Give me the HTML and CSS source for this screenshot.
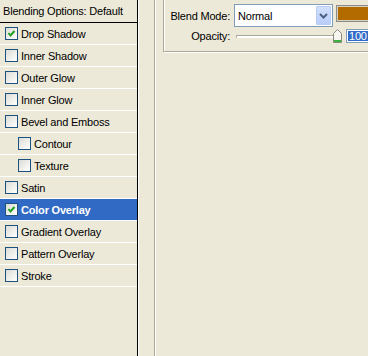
FILE: index.html
```html
<!DOCTYPE html>
<html lang="en">

<head>
  <meta charset="UTF-8">
  <title>Layer Style</title>
  <link rel="stylesheet" href="styles.css">
</head>

<body>
  <aside class="styles-panel">
    <div class="panel-title">Blending Options: Default</div>
    <ul class="style-list">
      <li class="style-row"><span class="check"><svg viewBox="0 0 11 11"><path d="M2.5 5 L4.5 7.5 L8.5 3" /></svg></span>Drop Shadow</li>
      <li class="style-row"><span class="check"></span>Inner Shadow</li>
      <li class="style-row"><span class="check"></span>Outer Glow</li>
      <li class="style-row"><span class="check"></span>Inner Glow</li>
      <li class="style-row"><span class="check"></span>Bevel and Emboss</li>
      <li class="style-row sub"><span class="check"></span>Contour</li>
      <li class="style-row sub"><span class="check"></span>Texture</li>
      <li class="style-row"><span class="check"></span>Satin</li>
      <li class="style-row active"><span class="check"><svg viewBox="0 0 11 11"><path d="M2.5 5 L4.5 7.5 L8.5 3" /></svg></span>Color Overlay</li>
      <li class="style-row"><span class="check"></span>Gradient Overlay</li>
      <li class="style-row"><span class="check"></span>Pattern Overlay</li>
      <li class="style-row"><span class="check"></span>Stroke</li>
    </ul>
  </aside>

  <div class="divider"></div>

  <main class="options">
    <section class="group">
      <div class="field">
        <label class="field-label">Blend Mode:</label>
        <div class="combo">
          <span class="combo-text">Normal</span>
          <span class="combo-btn"><svg viewBox="0 0 13 17"><path d="M3 7 L6.5 10.5 L10 7" /></svg></span>
        </div>
        <div class="swatch"></div>
      </div>
      <div class="field">
        <label class="field-label">Opacity:</label>
        <div class="slider">
          <div class="track"></div>
          <svg class="thumb" viewBox="0 0 9 14">
            <path d="M0.5 4.5 L4.5 0.5 L8.5 4.5 L8.5 13.5 L0.5 13.5 Z" fill="#f7f6ef" stroke="#8a8a80" />
            <path d="M1 11.5 H8 M1 12.5 H8" stroke="#3bb33b" />
          </svg>
        </div>
        <div class="num-input"><span class="num-sel">100</span></div>
      </div>
    </section>
  </main>
</body>

</html>
```

FILE: styles.css
```css
* {
  box-sizing: border-box;
  margin: 0;
  padding: 0;
}

body {
  display: flex;
  width: 368px;
  height: 356px;
  overflow: hidden;
  background: #ece9d8;
  color: #000;
  font-family: 'Liberation Sans', Arial, sans-serif;
  font-size: 11px;
  letter-spacing: -0.2px;
}

.styles-panel {
  flex: 0 0 138px;
  border-right: 1px solid #000;
  box-shadow: 1px 0 0 #fff;
  height: 356px;
}

.panel-title {
  height: 23px;
  line-height: 22px;
  padding-left: 3px;
  border-bottom: 1px solid #000;
  white-space: nowrap;
}

.style-list {
  list-style: none;
}

.style-row {
  display: flex;
  align-items: center;
  height: 22px;
  padding-left: 5px;
  border-bottom: 1px solid #fff;
  white-space: nowrap;
}

.style-row.sub {
  padding-left: 18px;
}

.style-row.active {
  background: #316ac5;
  color: #fff;
  font-weight: bold;
}

.check {
  flex: 0 0 13px;
  width: 13px;
  height: 13px;
  margin-right: 3px;
  border: 1px solid #1c5180;
  background: linear-gradient(135deg, #dcdcd5, #fff);
}

.check svg {
  display: block;
  width: 11px;
  height: 11px;
}

.check path {
  fill: none;
  stroke: #21a121;
  stroke-width: 2;
}

.divider {
  flex: 0 0 2px;
  margin-left: 16px;
  border-left: 1px solid #aca899;
  border-right: 1px solid #fff;
}

.options {
  flex: 1 1 auto;
  min-width: 0;
  overflow: hidden;
  padding-left: 7px;
}

.group {
  width: 230px;
  margin-top: -20px;
  padding: 23px 0 8px;
  border: 1px solid #aca899;
  box-shadow: 1px 1px 0 #fff, inset 1px 1px 0 #fff;
}

.field {
  display: flex;
  align-items: center;
}

.field + .field {
  margin-top: 1px;
}

.field-label {
  width: 66px;
  text-align: right;
  white-space: nowrap;
}

.combo {
  display: flex;
  align-items: center;
  justify-content: space-between;
  width: 99px;
  height: 23px;
  margin-left: 4px;
  padding: 0 1px 0 3px;
  border: 1px solid #7f9db9;
  background: #fff;
}

.combo-btn {
  width: 15px;
  height: 19px;
  border: 1px solid #b7cbf5;
  border-radius: 1px;
  background: linear-gradient(#d3e0fd, #b9cdf9);
}

.combo-btn svg {
  display: block;
  width: 13px;
  height: 17px;
}

.combo-btn path {
  fill: none;
  stroke: #4d6185;
  stroke-width: 2;
}

.swatch {
  width: 40px;
  height: 17px;
  margin-left: 3px;
  margin-top: -5px;
  border: 1px solid #8c8c8c;
  box-shadow: inset 0 0 0 1px #d8d2c0;
  background: #b36b00;
}

.slider {
  display: flex;
  align-items: center;
  width: 106px;
  height: 15px;
  margin-left: 6px;
}

.track {
  width: 97px;
  height: 3px;
  margin-top: 2px;
  border-top: 1px solid #aca899;
  border-left: 1px solid #aca899;
  background: #fff;
  border-radius: 1px 0 0 1px;
}

.thumb {
  display: block;
  width: 9px;
  height: 14px;
  margin-top: 1px;
}

.num-input {
  display: flex;
  align-items: center;
  width: 30px;
  height: 14px;
  margin-left: 4px;
  padding-left: 1px;
  border: 1px solid #7f9db9;
  background: #fff;
}

.num-sel {
  padding: 0 1px;
  line-height: 10px;
  background: #316ac5;
  color: #fff;
}
```
